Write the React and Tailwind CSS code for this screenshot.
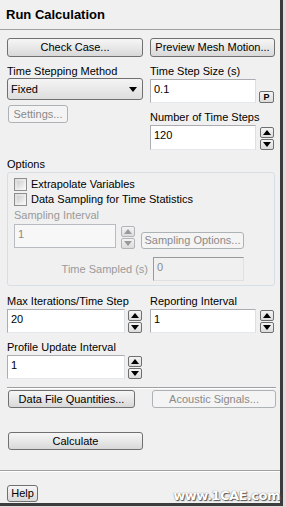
import React from 'react';

const btnBase =
  'flex items-center justify-center border border-[#707070] rounded-[3px] bg-linear-to-b from-[#f6f6f6] via-[#e8e8e8] to-[#d8d8d8] text-black';
const btnOff =
  'flex items-center justify-center border border-[#adb2b5] rounded-[3px] bg-[#f4f4f4] text-[#8a8a8a]';
const field =
  'border border-[#abadb3] border-b-[#e3e9ef] border-r-[#dbdfe6] bg-white px-[3px] pt-[3px] leading-[13px]';

function Spin({ up, off }) {
  return (
    <div
      className={
        'flex items-center justify-center w-[14px] h-[11px] rounded-[2px] border bg-linear-to-b from-[#f4f4f4] to-[#dcdcdc] ' +
        (off ? 'border-[#b0b4b8]' : 'border-[#6f6f6f]')
      }
    >
      <svg width="8" height="5" viewBox="0 0 8 5">
        <polygon points={up ? '0,5 8,5 4,0' : '0,0 8,0 4,5'} fill={off ? '#9a9a9a' : '#000'} />
      </svg>
    </div>
  );
}

function Spins({ off }) {
  return (
    <div className="flex flex-col gap-[1px]">
      <Spin up off={off} />
      <Spin off={off} />
    </div>
  );
}

function Check({ label }) {
  return (
    <div className="flex items-center h-[15px]">
      <div className="w-[13px] h-[13px] border border-[#8e8f8f] bg-linear-to-br from-[#dcdcdc] to-[#f8f8f8] p-[2px]">
        <div className="w-full h-full bg-linear-to-br from-[#cfcfcf] to-[#f2f2f2]" />
      </div>
      <span className="ml-[4px]">{label}</span>
    </div>
  );
}

export default function App() {
  return (
    <div className="relative w-[286px] h-[507px] bg-[#dcdcdc] font-['Liberation_Sans',Arial,sans-serif] text-[11px] text-black">
      <div className="w-[283px] h-[506px] bg-[#f0f0f0] border-r-[3px] border-b-[3px] border-[#3c3c3c] flex flex-col">
        <div className="h-[30px] shrink-0 border-b border-[#a0a0a0] px-[6px] pt-[1px] flex items-center">
          <span className="font-bold text-[13px]">Run Calculation</span>
        </div>

        <div className="px-[7px] pt-[8px]">
          <div className="grid grid-cols-[136px_125px] gap-x-[7px]">
            <div className={btnBase + ' h-[19px]'}>Check Case...</div>
            <div className={btnBase + ' h-[19px]'}>Preview Mesh Motion...</div>
          </div>

          <div className="grid grid-cols-[136px_125px] gap-x-[7px] mt-[7px]">
            <div className="flex flex-col">
              <div className="h-[14px] leading-[14px]">Time Stepping Method</div>
              <div className="h-[22px] border border-[#707070] rounded-[3px] bg-linear-to-b from-[#f4f4f4] to-[#dedede] flex items-center justify-between pl-[3px] pr-[5px]">
                <span>Fixed</span>
                <svg width="8" height="5" viewBox="0 0 8 5">
                  <polygon points="0,0 8,0 4,5" fill="#000" />
                </svg>
              </div>
              <div className={btnOff + ' h-[18px] w-[60px] mt-[5px] ml-[1px]'}>Settings...</div>
            </div>
            <div className="flex flex-col">
              <div className="h-[14px] leading-[14px]">Time Step Size (s)</div>
              <div className="flex items-end mt-[1px]">
                <div className={field + ' w-[106px] h-[24px]'}>0.1</div>
                <div className="ml-[3px] w-[15px] h-[12px] border border-[#6f6f6f] rounded-[2px] bg-linear-to-b from-[#f4f4f4] to-[#dcdcdc] flex items-center justify-center text-[9px] leading-none font-bold">
                  P
                </div>
              </div>
              <div className="h-[14px] leading-[14px] mt-[7px]">Number of Time Steps</div>
              <div className="flex items-end mt-[1px]">
                <div className={field + ' w-[106px] h-[25px]'}>120</div>
                <div className="ml-[4px]">
                  <Spins />
                </div>
              </div>
            </div>
          </div>

          <div className="h-[14px] leading-[14px] mt-[7px]">Options</div>
          <div className="mt-[1px] w-[268px] border border-[#d5dfe5] rounded-[3px] pl-[6px] pt-[4px] pb-[4px]">
            <Check label="Extrapolate Variables" />
            <Check label="Data Sampling for Time Statistics" />
            <div className="h-[14px] leading-[14px] mt-[1px] text-[#9a9a9a]">Sampling Interval</div>
            <div className="flex items-start mt-[2px]">
              <div className="w-[102px] h-[24px] border border-[#b8bcc2] bg-[#f7f7f7] px-[3px] pt-[3px] leading-[13px] text-[#8a8a8a]">
                1
              </div>
              <div className="ml-[5px] mt-[2px]">
                <Spins off />
              </div>
              <div className={btnOff + ' h-[17px] ml-[6px] mt-[8px] w-[103px]'}>Sampling Options...</div>
            </div>
            <div className="flex items-center mt-[8px]">
              <div className="w-[139px] text-right pr-[5px] text-[#9a9a9a]">Time Sampled (s)</div>
              <div className="w-[91px] h-[24px] border border-[#9a9a9a] border-b-[#e0e0e0] border-r-[#e0e0e0] bg-[#f0f0f0] px-[3px] pt-[3px] leading-[13px] text-[#8a8a8a]">
                0
              </div>
            </div>
          </div>

          <div className="grid grid-cols-[136px_125px] gap-x-[7px] mt-[8px]">
            <div className="flex flex-col">
              <div className="h-[14px] leading-[14px]">Max Iterations/Time Step</div>
              <div className="flex items-end mt-[1px]">
                <div className={field + ' w-[118px] h-[24px]'}>20</div>
                <div className="ml-[3px]">
                  <Spins />
                </div>
              </div>
              <div className="h-[14px] leading-[14px] mt-[7px]">Profile Update Interval</div>
              <div className="flex items-end mt-[1px]">
                <div className={field + ' w-[118px] h-[24px]'}>1</div>
                <div className="ml-[3px]">
                  <Spins />
                </div>
              </div>
            </div>
            <div className="flex flex-col">
              <div className="h-[14px] leading-[14px]">Reporting Interval</div>
              <div className="flex items-end mt-[1px]">
                <div className={field + ' w-[106px] h-[24px]'}>1</div>
                <div className="ml-[4px]">
                  <Spins />
                </div>
              </div>
            </div>
          </div>

          <div className="mt-[8px] w-[269px] h-[2px] border-t border-[#a0a0a0] border-b border-b-white" />

          <div className="grid grid-cols-[127px_124px] gap-x-[17px] mt-[1px] pl-[1px]">
            <div className={btnBase + ' h-[18px]'}>Data File Quantities...</div>
            <div className={btnOff + ' h-[18px]'}>Acoustic Signals...</div>
          </div>

          <div className={btnBase + ' h-[18px] mt-[24px] ml-[1px] w-[135px]'}>Calculate</div>
        </div>

        <div className="mt-[20px] h-[2px] shrink-0 border-t border-[#a0a0a0] border-b border-b-white" />

        <div className="px-[7px] pt-[13px]">
          <div className={btnBase + ' w-[31px] h-[17px]'}>Help</div>
        </div>
      </div>

      <div className="absolute right-[6px] bottom-[2px] font-['DejaVu_Sans',sans-serif] font-bold text-[13px] text-white [text-shadow:0_0_1px_#555,1px_1px_1px_#555] tracking-[-0.5px]">
        www.1CAE.com
      </div>
    </div>
  );
}
